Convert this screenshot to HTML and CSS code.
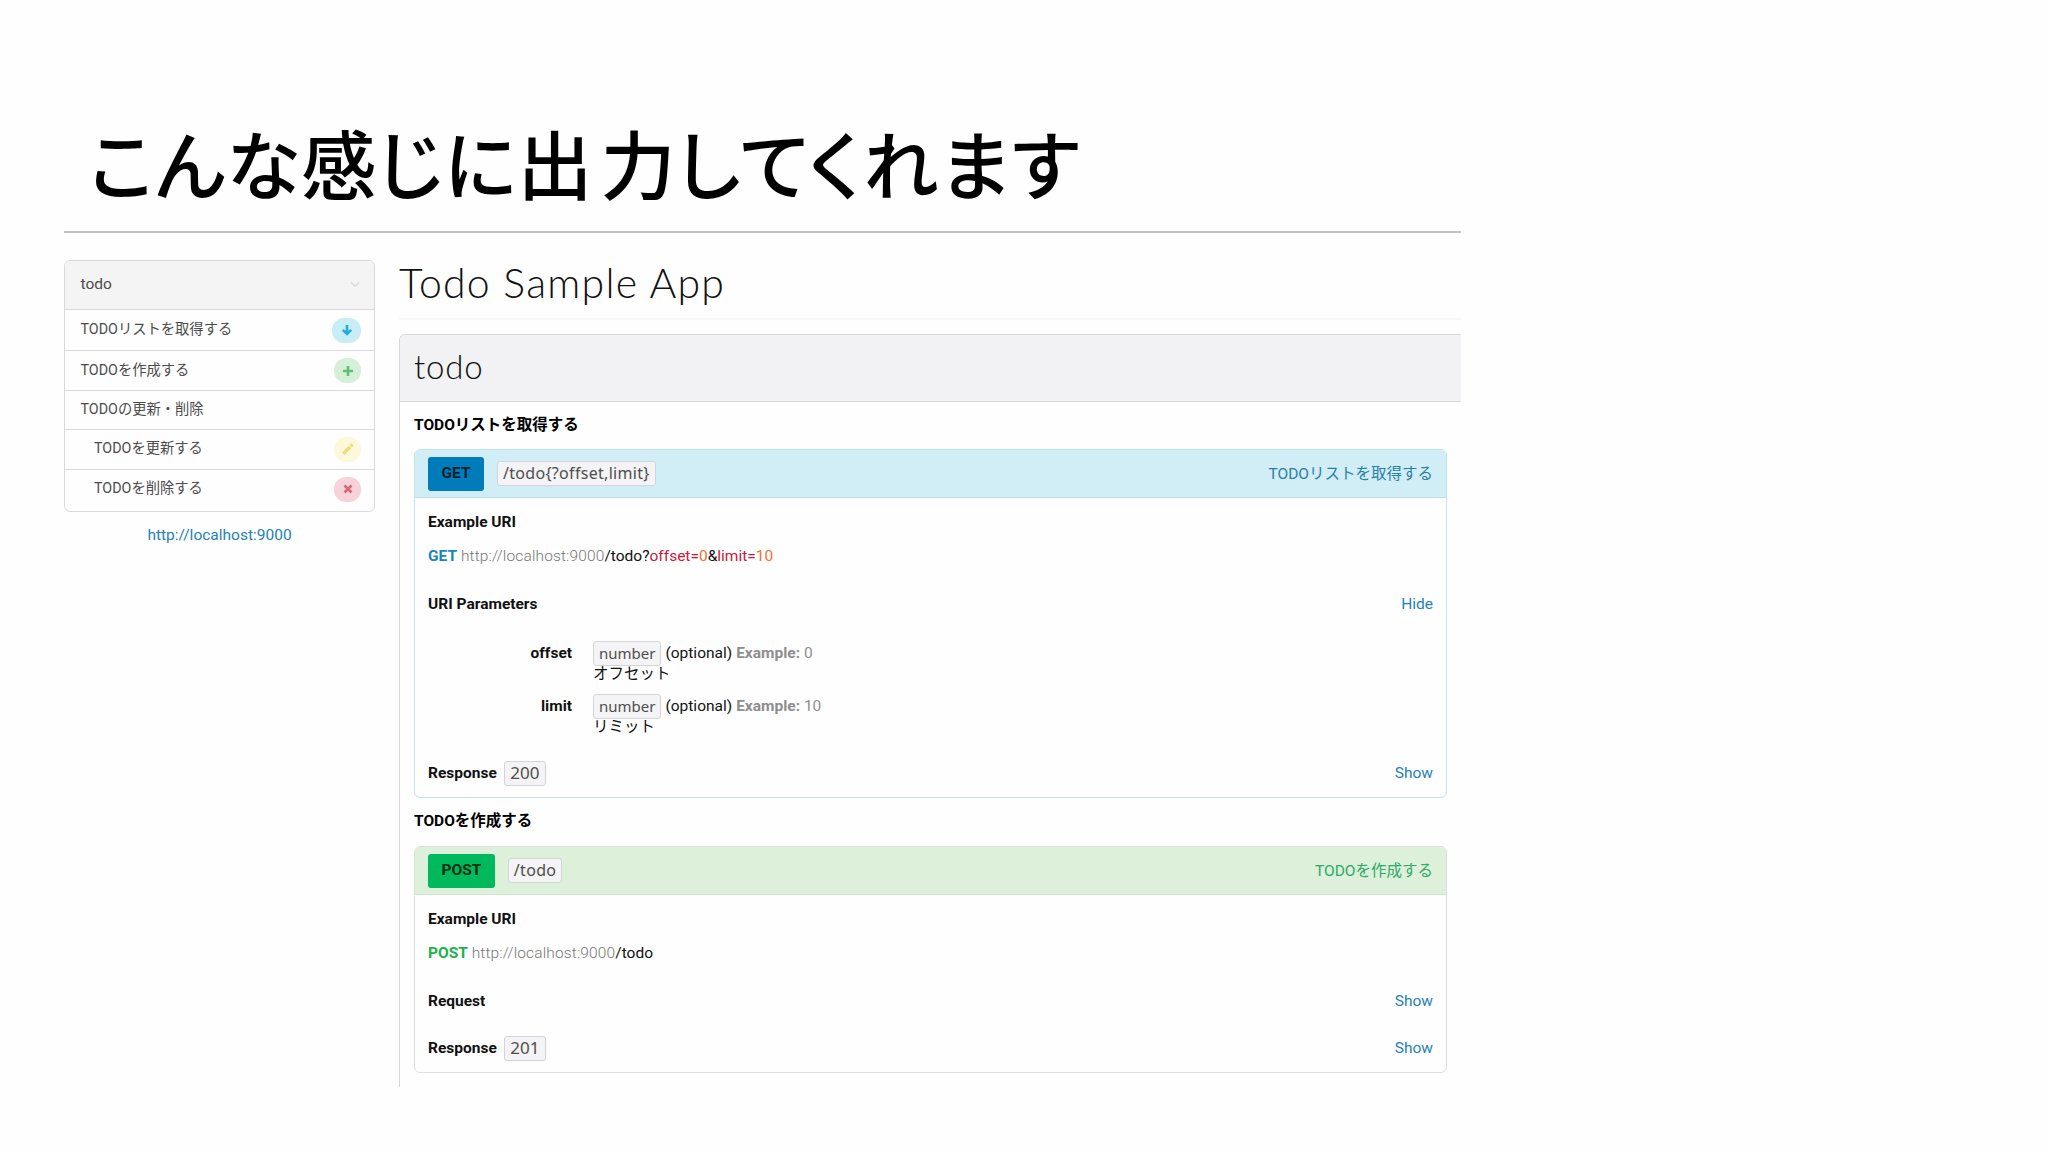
FILE: index.html
```html
<!DOCTYPE html>
<html lang="ja">
<head>
  <meta charset="UTF-8" />
  <meta name="viewport" content="width=device-width, initial-scale=1.0"/>
  <title>Todo Sample App</title>
  <link rel="stylesheet" href="styles.css">
</head>
<body>
  <div class="slide">
    <h1 class="slide-title">こんな感じに<span class="wide">出</span>力<span class="tail">してくれます</span></h1>

    <div class="content">
      <aside class="sidebar">
        <nav class="menu">
          <div class="menu-head">
            <span>todo</span>
            <svg class="chevron" viewBox="0 0 10 7"><path d="M1 1.2l4 4 4-4"/></svg>
          </div>
          <a class="menu-item first">TODOリストを取得する
            <span class="icon get"><svg viewBox="0 0 12 12"><path d="M6 1v9M1.8 5.8L6 10l4.2-4.2"/></svg></span>
          </a>
          <a class="menu-item">TODOを作成する
            <span class="icon post"><svg viewBox="0 0 12 12"><path d="M6 1v10M1 6h10"/></svg></span>
          </a>
          <a class="menu-item group">TODOの更新・削除</a>
          <a class="menu-item sub">TODOを更新する
            <span class="icon put"><svg viewBox="0 0 12 12"><path d="M1.2 10.8l6.8-6.8M8.6 3.4l2-2"/></svg></span>
          </a>
          <a class="menu-item sub">TODOを削除する
            <span class="icon delete"><svg viewBox="0 0 12 12"><path d="M2.5 2.5l7 7M9.5 2.5l-7 7"/></svg></span>
          </a>
        </nav>
        <a class="host">http://localhost:9000</a>
      </aside>

      <main class="main">
        <h2 class="app-title">Todo Sample App</h2>
        <section class="panel">
          <h3 class="panel-head">todo</h3>

          <h4 class="action-title">TODOリストを取得する</h4>
          <div class="card card-get">
            <div class="card-head">
              <span class="method">GET</span>
              <code>/todo{?offset,limit}</code>
              <span class="name">TODOリストを取得する</span>
            </div>
            <div class="card-body">
              <div class="row"><b>Example URI</b></div>
              <div class="row uri"><b class="verb">GET</b> <span class="muted">http://localhost:9000</span>/todo?<span class="key">offset=</span><span class="val">0</span>&amp;<span class="key">limit=</span><span class="val">10</span></div>
              <div class="row params-head"><b>URI Parameters</b><a>Hide</a></div>
              <dl class="params">
                <dt>offset</dt>
                <dd>
                  <div class="type"><code>number</code> (optional) <span class="muted"><b>Example:</b> 0</span></div>
                  <div class="desc">オフセット</div>
                </dd>
                <dt>limit</dt>
                <dd>
                  <div class="type"><code>number</code> (optional) <span class="muted"><b>Example:</b> 10</span></div>
                  <div class="desc">リミット</div>
                </dd>
              </dl>
              <div class="row response"><b>Response</b><code>200</code><a>Show</a></div>
            </div>
          </div>

          <h4 class="action-title">TODOを作成する</h4>
          <div class="card card-post">
            <div class="card-head">
              <span class="method">POST</span>
              <code>/todo</code>
              <span class="name">TODOを作成する</span>
            </div>
            <div class="card-body">
              <div class="row"><b>Example URI</b></div>
              <div class="row uri"><b class="verb">POST</b> <span class="muted">http://localhost:9000</span>/todo</div>
              <div class="row request"><b>Request</b><a>Show</a></div>
              <div class="row response"><b>Response</b><code>201</code><a>Show</a></div>
            </div>
          </div>
        </section>
      </main>
    </div>
  </div>
</body>
</html>
```
FILE: styles.css
```css
* {
  box-sizing: border-box;
}

body {
  margin: 0;
  background: #fefefe;
  color: #111;
  font-family: Roboto, "Noto Sans CJK JP", sans-serif;
  font-size: 15.5px;
}

h1, h2, h3, h4, dl, dd {
  margin: 0;
}

b, dt, h4 {
  font-weight: 700;
}

a {
  color: #2482b8;
}

.slide {
  width: 1397px;
  margin-left: 64px;
}

.slide-title {
  height: 233px;
  padding: 106px 0 0 25px;
  border-bottom: 2px solid #c2c2c2;
  color: #000;
  font-family: "Noto Sans CJK JP", sans-serif;
  font-size: 75px;
  font-weight: 500;
  line-height: 112px;
  font-feature-settings: "palt";
  letter-spacing: 1.2px;
  white-space: nowrap;
}

.slide-title .wide {
  letter-spacing: 8px;
}

.slide-title .tail {
  letter-spacing: 2.3px;
}

.content {
  display: flex;
  gap: 24px;
  padding-top: 27px;
}

/* sidebar */
.sidebar {
  width: 311px;
  text-align: center;
}

.menu {
  height: 252px;
  border: 1px solid #d9d9dc;
  border-radius: 6px;
  text-align: left;
  overflow: hidden;
}

.menu-head {
  display: flex;
  align-items: center;
  justify-content: space-between;
  height: 48px;
  padding: 0 14px 2px 15.5px;
  background: #f4f4f4;
  color: #4c4c4c;
}

.chevron {
  width: 10px;
  height: 7px;
  fill: none;
  stroke: #dadada;
  stroke-width: 1.6;
}

.menu-item {
  display: flex;
  align-items: center;
  justify-content: space-between;
  height: 40px;
  padding: 0 13px 5px 15.5px;
  border-top: 1px solid #d9d9dc;
  color: #4c4c4c;
  font-size: 14.3px;
}

.menu-item.first {
  height: 41px;
}

.menu-item.group {
  height: 39px;
}

.menu-item.sub {
  padding-bottom: 6px;
  padding-left: 29px;
}

.icon {
  display: flex;
  align-items: center;
  justify-content: center;
  width: 27px;
  height: 25px;
  margin-top: 5px;
  border-radius: 12px;
}

.icon svg {
  width: 12px;
  height: 12px;
  fill: none;
  stroke: currentColor;
  stroke-width: 2.6;
}

.icon.get {
  width: 29px;
  background: #c8edf4;
  color: #25acd8;
}

.icon.post {
  background: #d5f0d6;
  color: #62bd78;
}

.icon.put {
  background: #fdf8dc;
  color: #eadd77;
}

.icon.put svg {
  stroke-width: 3.4;
}

.icon.delete {
  background: #f8d2d9;
  color: #d4697b;
}

.host {
  display: inline-block;
  margin-top: 13px;
  line-height: 20px;
}

/* main column */
.main {
  flex: 1;
}

.app-title {
  height: 60px;
  margin-bottom: 14px;
  border-bottom: 2px solid #f8f8fa;
  font-family: Lato, sans-serif;
  font-size: 41px;
  font-weight: 300;
  letter-spacing: 1.25px;
  line-height: 46px;
}

.panel {
  height: 753px;
  border-top: 1px solid #d8d8dc;
  border-left: 1px solid #d8d8dc;
  border-radius: 6px 0 0 0;
  padding: 0 14px;
}

.panel-head {
  height: 67px;
  margin: 0 -14px;
  padding-left: 14px;
  border-bottom: 1px solid #d8d8dc;
  border-radius: 5px 0 0 0;
  background: #f2f1f4;
  font-family: Lato, sans-serif;
  font-size: 33px;
  font-weight: 300;
  letter-spacing: 0.8px;
  line-height: 62px;
}

.action-title {
  height: 47px;
  color: #000;
  font-size: 15.5px;
  line-height: 46px;
}

.card {
  border: 1px solid #bfe6ea;
  border-radius: 6px;
}

.card + .action-title {
  height: 48px;
}

.card-head {
  display: flex;
  align-items: center;
  height: 48px;
  padding: 0 13px;
  border-bottom: 1px solid #b8e2ea;
  border-radius: 5px 5px 0 0;
  background: #d1edf5;
}

.method {
  height: 34px;
  margin-right: 13px;
  padding: 0 13.5px;
  border-radius: 3px;
  background: #007cba;
  color: #04202e;
  font-weight: 700;
  line-height: 33px;
}

.name {
  margin-left: auto;
  padding-bottom: 3px;
  color: #2a7fa8;
}

code {
  display: inline-block;
  height: 25px;
  padding: 0 5px;
  border: 1px solid #d4d4d8;
  border-radius: 3px;
  background: #f4f3f5;
  color: #4e4e4e;
  font-family: "Noto Sans", sans-serif;
  font-size: 16px;
  line-height: 22px;
}

.card-head code {
  margin-bottom: 1px;
  letter-spacing: 0.3px;
}

.card-body {
  padding: 12px 13px;
}

.row {
  display: flex;
  align-items: center;
  height: 24px;
}

.row a {
  margin-left: auto;
}

.row code {
  margin-left: 7px;
  padding: 0 5.5px;
  font-size: 17px;
}

.uri {
  display: block;
  margin-top: 10px;
  line-height: 24px;
}

.verb {
  color: #1b87b4;
}

.muted {
  color: #8e8e8e;
}

.uri .muted {
  font-weight: 300;
  letter-spacing: 0.14px;
  color: #777;
}

.key {
  color: #c8193c;
}

.val {
  color: #ee7033;
}

.params-head,
.request {
  margin-top: 24px;
}

.params {
  display: grid;
  grid-template-columns: 144px 1fr;
  column-gap: 21px;
  row-gap: 11px;
  margin-top: 25px;
}

.params dt {
  line-height: 24px;
  text-align: right;
}

.type {
  display: flex;
  align-items: center;
  gap: 4px;
  height: 24px;
}

.type code {
  font-size: 15px;
}

.desc {
  height: 18px;
  line-height: 18px;
}

.response {
  margin-top: 25px;
}

.request + .response {
  margin-top: 23px;
}

.card-post {
  border-color: #dcdfdc;
}

.card-post .card-head {
  border-color: #cfe6d0;
  background: #dcf0da;
}

.card-post .method {
  background: #00b95c;
  color: #042e14;
}

.card-post .name {
  color: #2faa68;
}

.card-post .verb {
  color: #1db14b;
}
```
